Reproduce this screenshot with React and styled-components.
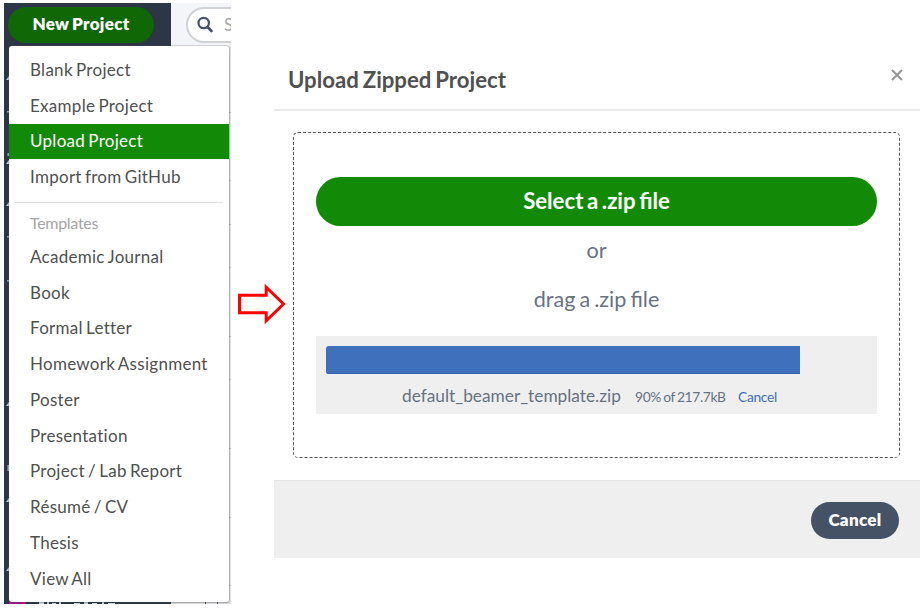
import React from "react";
import styled, { createGlobalStyle } from "styled-components";

const Global = createGlobalStyle`
  *, *::before, *::after { box-sizing: border-box; }
  body { margin: 0; background: #fff; font-family: Lato, "Open Sans", sans-serif; }
  button { font-family: inherit; border: 0; padding: 0; cursor: pointer; }
`;

const Page = styled.main`
  display: flex;
  width: 921px;
  height: 608px;
  padding: 3px 1px 4px 4px;
  overflow: hidden;
`;

const Dashboard = styled.section`
  position: relative;
  display: flex;
  flex: 0 0 227px;
  height: 601px;
  overflow: hidden;
`;

const Sidebar = styled.aside`
  width: 167px;
  padding: 4px 0 0 4px;
  background: #2c3645;
`;

const NewProject = styled.button`
  display: block;
  width: 146px;
  height: 36px;
  padding-bottom: 3px;
  border-radius: 18px;
  background: #0f6706;
  color: #fff;
  font-size: 17px;
  font-weight: 800;
  letter-spacing: 0.3px;
  word-spacing: -1px;
`;

const ListPane = styled.div`
  flex: 1;
  padding: 4px 0 0 15px;
  background: #f4f5f8;
  overflow: hidden;
`;

const Search = styled.div`
  display: flex;
  align-items: center;
  gap: 11px;
  width: 120px;
  height: 36px;
  padding: 0 0 1px 9px;
  border: 2px solid #d0d2d6;
  border-radius: 18px;
  background: #fff;
  color: #a4a7ad;
  font-size: 17px;
`;

const Slivers = styled.svg`
  position: absolute;
  left: 0;
  top: 0;
`;

const Menu = styled.ul`
  position: absolute;
  left: 5px;
  top: 43px;
  width: 220px;
  height: 556px;
  margin: 0;
  padding: 6px 0 0;
  list-style: none;
  background: #fff;
  border-radius: 3px;
  box-shadow: 0 0 0 1px rgba(80, 84, 92, 0.22), 1px 1px 2px rgba(0, 0, 0, 0.15);
`;

const Item = styled.li`
  display: flex;
  align-items: center;
  height: 35.75px;
  padding: 0 0 1px 21px;
  font-size: 17px;
  letter-spacing: 0.28px;
  word-spacing: -1.4px;
  color: ${(p) => (p.$active ? "#fff" : "#505050")};
  background: ${(p) => (p.$active ? "#138a07" : "transparent")};
`;

const Divider = styled.li`
  height: 1px;
  margin: 7px 6px 9px;
  background: #e2e2e2;
`;

const GroupLabel = styled.li`
  height: 27px;
  padding: 1px 0 0 21px;
  font-size: 16px;
  line-height: 20px;
  letter-spacing: -0.3px;
  color: #a5a5a5;
`;

const ArrowCell = styled.div`
  display: flex;
  align-items: center;
  flex: 0 0 43px;
  min-width: 0;
  padding-left: 7px;
  svg { flex: none; overflow: visible; }
`;

const Modal = styled.section`
  flex: 0 0 646px;
  display: flex;
  flex-direction: column;
  padding-top: 45px;
`;

const Header = styled.header`
  display: flex;
  justify-content: space-between;
  height: 63px;
  padding: 17px 17px 0 14px;
  border-bottom: 2px solid #e9e9e9;
`;

const Title = styled.h1`
  margin: 0;
  font-size: 22.2px;
  line-height: 29px;
  font-weight: 700;
  word-spacing: -1.5px;
  color: #505050;
`;

const Close = styled.button`
  width: 12px;
  height: 12px;
  margin-top: 4px;
  background: none;
  svg { display: block; }
`;

const Body = styled.div`
  height: 369px;
  padding: 21px 20px 0 19px;
`;

const DropZone = styled.div`
  display: flex;
  flex-direction: column;
  height: 326px;
  padding: 44px 22px 0;
  border: 1px dashed #555;
  border-radius: 5px;
`;

const Select = styled.button`
  height: 49px;
  padding-bottom: 3px;
  border-radius: 25px;
  background: #138a07;
  color: #fff;
  font-size: 22.2px;
  font-weight: 700;
  word-spacing: -1.8px;
`;

const Hint = styled.p`
  margin: 0;
  height: 49px;
  line-height: 48px;
  text-align: center;
  font-size: 21.6px;
  word-spacing: -1.5px;
  color: #677283;
`;

const Upload = styled.div`
  height: 78px;
  margin-top: 12px;
  padding: 10px;
  background: #efefef;
`;

const Bar = styled.div`
  height: 28px;
  border-radius: 3px 0 0 3px;
  background: #3f70bb;
  box-shadow: inset 0 -1px 0 #3563a9;
`;

const Status = styled.div`
  display: flex;
  align-items: baseline;
  height: 40px;
  padding: 11px 0 0 76px;
  white-space: nowrap;
  color: #677283;
`;

const FileName = styled.span`
  width: 233px;
  font-size: 17.3px;
  line-height: 22px;
`;

const Amount = styled.span`
  width: 103px;
  font-size: 13.8px;
  letter-spacing: -0.35px;
  word-spacing: -1px;
`;

const CancelLink = styled.a`
  font-size: 13.8px;
  letter-spacing: -0.3px;
  color: #3f70bb;
`;

const Footer = styled.footer`
  display: flex;
  justify-content: flex-end;
  height: 78px;
  padding: 21px 21px 0 0;
  border-top: 1px solid #e3e3e3;
  background: #efefef;
`;

const Cancel = styled.button`
  width: 88px;
  height: 37px;
  padding-bottom: 2px;
  border-radius: 19px;
  background: #455165;
  color: #fff;
  font-size: 17px;
  font-weight: 800;
  letter-spacing: 0.3px;
`;

const actions = ["Blank Project", "Example Project", "Upload Project", "Import from GitHub"];
const templates = [
  "Academic Journal", "Book", "Formal Letter", "Homework Assignment", "Poster",
  "Presentation", "Project / Lab Report", "Résumé / CV", "Thesis", "View All",
];
const wedges = [74, 158, 200, 400, 496, 565];
const dots = [108, 233, 277];
const rules = [109, 177, 221, 264, 333, 376, 445, 514, 582];

function SearchIcon() {
  return (
    <svg width="16" height="17" viewBox="0 0 16 17" fill="none" stroke="#455165">
      <circle cx="6.7" cy="7" r="5.2" strokeWidth="2.2" />
      <path d="M10.6 11l3.8 4" strokeWidth="2.7" strokeLinecap="round" />
    </svg>
  );
}

export default function App() {
  return (
    <>
      <Global />
      <Page>
        <Dashboard>
          <Sidebar>
            <NewProject>New Project</NewProject>
          </Sidebar>
          <ListPane>
            <Search><SearchIcon />S</Search>
          </ListPane>
          <Slivers width="227" height="601">
            <path d="M225 41h2v560h-2z" fill="#e9eaec" />
            {wedges.map((y) => <path key={y} d={`M2 ${y + 3}l3-4v4z`} fill="#b6cbe8" />)}
            {dots.map((y) => <path key={y} d={`M3 ${y}h2v1.4h-2z`} fill="#7fa9c4" />)}
            <path d="M3.5 150h1.5v3h-1.5zM3.5 462h1.5v6h-1.5z" fill="#8fc0dd" />
            {rules.map((y) => <path key={y} d={`M225 ${y}h2v1h-2z`} fill="#c4c6ca" />)}
            <path d="M5 599h17v2h-17z" fill="#b0148a" />
            <path d="M35 599h5v2h-5zM43 599h2v2h-2zM48 600h4v1h-4zM55 599h2v2h-2zM70 600h6v1h-6zM80 599h4v2h-4zM88 600h5v1h-5zM98 599h2v2h-2zM104 600h7v1h-7z" fill="#d5d8dd" />
            <path d="M167 599h60v2h-60z" fill="#dcdddf" />
            <path d="M201 599h1v2h-1zM213 599h1v2h-1z" fill="#555" />
          </Slivers>
          <Menu>
            {actions.map((a) => <Item key={a} $active={a === "Upload Project"}>{a}</Item>)}
            <Divider />
            <GroupLabel>Templates</GroupLabel>
            {templates.map((t) => <Item key={t}>{t}</Item>)}
          </Menu>
        </Dashboard>
        <ArrowCell>
          <svg width="48" height="42" viewBox="0 0 48 42">
            <path d="M1.5 12.2H28.2V4.2L45.5 21 28.2 37.8V29.8H1.5Z" fill="#fff" stroke="#f00" strokeWidth="3" />
          </svg>
        </ArrowCell>
        <Modal>
          <Header>
            <Title>Upload Zipped Project</Title>
            <Close aria-label="Close">
              <svg width="12" height="12" viewBox="0 0 12 12">
                <path d="M1 1l10 10M11 1L1 11" stroke="#999" strokeWidth="2.2" />
              </svg>
            </Close>
          </Header>
          <Body>
            <DropZone>
              <Select>Select a .zip file</Select>
              <Hint>or</Hint>
              <Hint>drag a .zip file</Hint>
              <Upload>
                <Bar style={{ width: `${473.5 / 5.4}%` }} />
                <Status>
                  <FileName>default_beamer_template.zip</FileName>
                  <Amount>90% of 217.7kB</Amount>
                  <CancelLink>Cancel</CancelLink>
                </Status>
              </Upload>
            </DropZone>
          </Body>
          <Footer><Cancel>Cancel</Cancel></Footer>
        </Modal>
      </Page>
    </>
  );
}
